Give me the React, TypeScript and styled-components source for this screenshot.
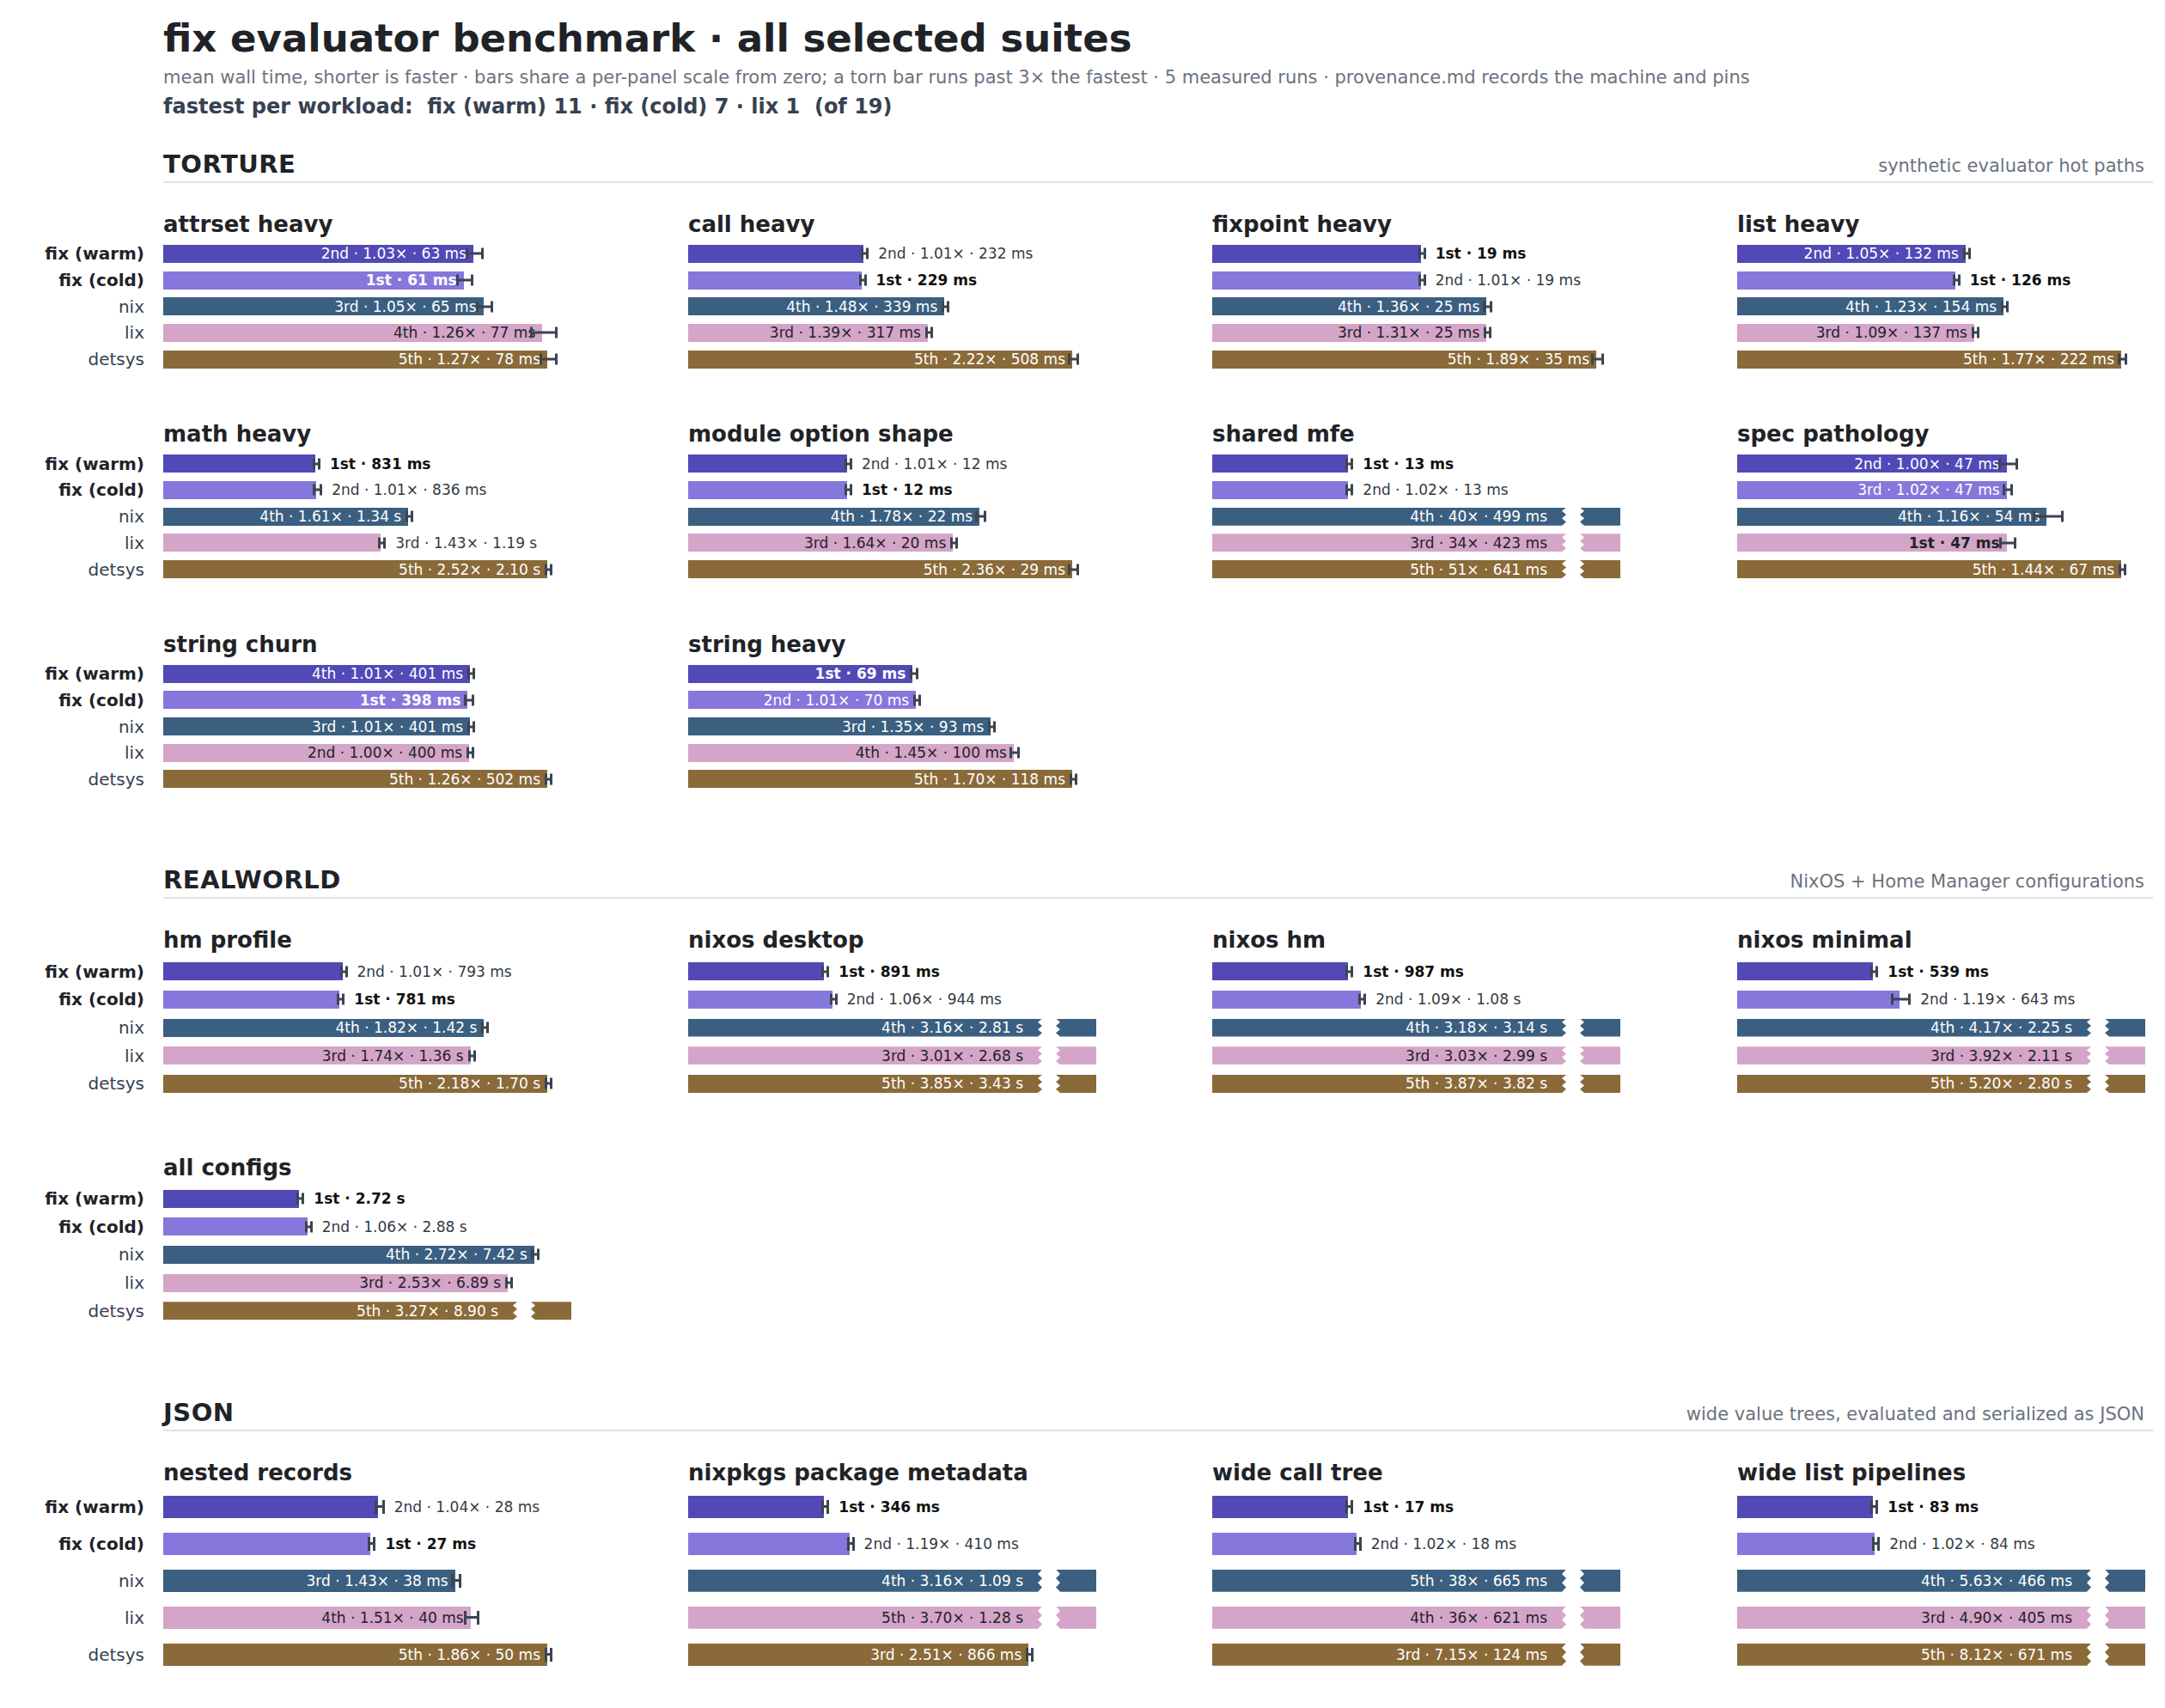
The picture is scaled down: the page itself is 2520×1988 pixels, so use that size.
import React from "react";
import styled, { createGlobalStyle } from "styled-components";

const Global = createGlobalStyle`
  html, body { margin: 0; padding: 0; background: #fff; }
  body { font-family: "DejaVu Sans", "Liberation Sans", sans-serif; color: #1f2328; }
`;

type Row = { t: string; v: number; e: number };
type Panel = { name: string; rows: Row[] };
type Section = { name: string; caption: string; rowH: number; barH: number; titleGap: number; panelGap: number; panels: Panel[] };

const r = (t: string, v: number, e: number): Row => ({ t, v, e });

const COLORS = ["#5249b7", "#8677dc", "#3b5f80", "#d4a5c8", "#8a6a39"];
const LABELS = ["fix (warm)", "fix (cold)", "nix", "lix", "detsys"];
const MAXW = 447;
const TORNW = 475;

const sections: Section[] = [
  {
    name: "TORTURE", caption: "synthetic evaluator hot paths", rowH: 30.7, barH: 21, titleGap: 4, panelGap: 57,
    panels: [
      { name: "attrset heavy", rows: [r("2nd · 1.03× · 63 ms", 63, 1.5), r("1st · 61 ms", 61, 1.5), r("3rd · 1.05× · 65 ms", 65, 1.5), r("4th · 1.26× · 77 ms", 77, 2.5), r("5th · 1.27× · 78 ms", 78, 1.5)] },
      { name: "call heavy", rows: [r("2nd · 1.01× · 232 ms", 232, 1), r("1st · 229 ms", 229, 1), r("4th · 1.48× · 339 ms", 339, 3), r("3rd · 1.39× · 317 ms", 317, 2), r("5th · 2.22× · 508 ms", 508, 6)] },
      { name: "fixpoint heavy", rows: [r("1st · 19 ms", 19, 0.2), r("2nd · 1.01× · 19 ms", 19, 0.2), r("4th · 1.36× · 25 ms", 25, 0.3), r("3rd · 1.31× · 25 ms", 25, 0.1), r("5th · 1.89× · 35 ms", 35, 0.5)] },
      { name: "list heavy", rows: [r("2nd · 1.05× · 132 ms", 132, 1.5), r("1st · 126 ms", 126, 1), r("4th · 1.23× · 154 ms", 154, 1), r("3rd · 1.09× · 137 ms", 137, 0.5), r("5th · 1.77× · 222 ms", 222, 2)] },
      { name: "math heavy", rows: [r("1st · 831 ms", 831, 10), r("2nd · 1.01× · 836 ms", 836, 20), r("4th · 1.61× · 1.34 s", 1340, 15), r("3rd · 1.43× · 1.19 s", 1190, 5), r("5th · 2.52× · 2.10 s", 2100, 15)] },
      { name: "module option shape", rows: [r("2nd · 1.01× · 12 ms", 12, 0.15), r("1st · 12 ms", 12, 0.1), r("4th · 1.78× · 22 ms", 22, 0.3), r("3rd · 1.64× · 20 ms", 20, 0.2), r("5th · 2.36× · 29 ms", 29, 0.3)] },
      { name: "shared mfe", rows: [r("1st · 13 ms", 13, 0.1), r("2nd · 1.02× · 13 ms", 13, 0.1), r("4th · 40× · 499 ms", 499, 1), r("3rd · 34× · 423 ms", 423, 1), r("5th · 51× · 641 ms", 641, 1)] },
      { name: "spec pathology", rows: [r("2nd · 1.00× · 47 ms", 47, 1.5), r("3rd · 1.02× · 47 ms", 47, 0.7), r("4th · 1.16× · 54 ms", 54, 2.5), r("1st · 47 ms", 47, 1.3), r("5th · 1.44× · 67 ms", 67, 0.3)] },
      { name: "string churn", rows: [r("4th · 1.01× · 401 ms", 401, 3), r("1st · 398 ms", 398, 5), r("3rd · 1.01× · 401 ms", 401, 3), r("2nd · 1.00× · 400 ms", 400, 2), r("5th · 1.26× · 502 ms", 502, 2)] },
      { name: "string heavy", rows: [r("1st · 69 ms", 69, 1), r("2nd · 1.01× · 70 ms", 70, 0.7), r("3rd · 1.35× · 93 ms", 93, 0.3), r("4th · 1.45× · 100 ms", 100, 1.2), r("5th · 1.70× · 118 ms", 118, 0.3)] },
    ],
  },
  {
    name: "REALWORLD", caption: "NixOS + Home Manager configurations", rowH: 32.7, barH: 21, titleGap: 5, panelGap: 66,
    panels: [
      { name: "hm profile", rows: [r("2nd · 1.01× · 793 ms", 793, 10), r("1st · 781 ms", 781, 8), r("4th · 1.82× · 1.42 s", 1420, 7), r("3rd · 1.74× · 1.36 s", 1360, 8), r("5th · 2.18× · 1.70 s", 1700, 3)] },
      { name: "nixos desktop", rows: [r("1st · 891 ms", 891, 5), r("2nd · 1.06× · 944 ms", 944, 15), r("4th · 3.16× · 2.81 s", 2810, 1), r("3rd · 3.01× · 2.68 s", 2680, 1), r("5th · 3.85× · 3.43 s", 3430, 1)] },
      { name: "nixos hm", rows: [r("1st · 987 ms", 987, 10), r("2nd · 1.09× · 1.08 s", 1080, 5), r("4th · 3.18× · 3.14 s", 3140, 1), r("3rd · 3.03× · 2.99 s", 2990, 1), r("5th · 3.87× · 3.82 s", 3820, 1)] },
      { name: "nixos minimal", rows: [r("1st · 539 ms", 539, 5), r("2nd · 1.19× · 643 ms", 643, 35), r("4th · 4.17× · 2.25 s", 2250, 1), r("3rd · 3.92× · 2.11 s", 2110, 1), r("5th · 5.20× · 2.80 s", 2800, 1)] },
      { name: "all configs", rows: [r("1st · 2.72 s", 2720, 10), r("2nd · 1.06× · 2.88 s", 2880, 40), r("4th · 2.72× · 7.42 s", 7420, 60), r("3rd · 2.53× · 6.89 s", 6890, 20), r("5th · 3.27× · 8.90 s", 8900, 1)] },
    ],
  },
  {
    name: "JSON", caption: "wide value trees, evaluated and serialized as JSON", rowH: 43, barH: 26, titleGap: 3, panelGap: 60,
    panels: [
      { name: "nested records", rows: [r("2nd · 1.04× · 28 ms", 28, 0.5), r("1st · 27 ms", 27, 0.3), r("3rd · 1.43× · 38 ms", 38, 0.5), r("4th · 1.51× · 40 ms", 40, 0.8), r("5th · 1.86× · 50 ms", 50, 0.3)] },
      { name: "nixpkgs package metadata", rows: [r("1st · 346 ms", 346, 1), r("2nd · 1.19× · 410 ms", 410, 2), r("4th · 3.16× · 1.09 s", 1090, 1), r("5th · 3.70× · 1.28 s", 1280, 1), r("3rd · 2.51× · 866 ms", 866, 5)] },
      { name: "wide call tree", rows: [r("1st · 17 ms", 17, 0.1), r("2nd · 1.02× · 18 ms", 18, 0.1), r("5th · 38× · 665 ms", 665, 1), r("4th · 36× · 621 ms", 621, 1), r("3rd · 7.15× · 124 ms", 124, 1)] },
      { name: "wide list pipelines", rows: [r("1st · 83 ms", 83, 0.3), r("2nd · 1.02× · 84 ms", 84, 0.3), r("4th · 5.63× · 466 ms", 466, 1), r("3rd · 4.90× · 405 ms", 405, 1), r("5th · 8.12× · 671 ms", 671, 1)] },
    ],
  },
];

const Page = styled.div`
  padding: 18px 14px 60px 0;
  width: 2506px;
`;
const Head = styled.div`
  padding-left: 190px;
`;
const Title = styled.h1`
  margin: 0; font-size: 45px; line-height: 54px; font-weight: 700; color: #1f2328;
`;
const Sub = styled.div`
  margin-top: 3px; font-size: 21px; line-height: 30px; color: #6b7280;
`;
const Fastest = styled.div`
  margin-top: 4px; font-size: 24px; line-height: 30px; font-weight: 700; color: #374151; white-space: pre;
`;
const SectionWrap = styled.section<{ $top: number }>`
  margin-top: ${p => p.$top}px;
`;
const SectionHead = styled.div`
  margin-left: 190px;
  display: flex; justify-content: space-between; align-items: flex-end;
  padding: 0 10px 4px 0;
  border-bottom: 2px solid #dde1e6;
`;
const SectionName = styled.div`
  font-size: 29px; line-height: 32px; font-weight: 700; color: #1f2328; letter-spacing: 0.5px;
`;
const SectionCaption = styled.div`
  font-size: 21px; line-height: 28px; color: #6b7280;
`;
const PanelRows = styled.div<{ $gap: number }>`
  margin-top: 33px;
  display: flex; flex-direction: column; gap: ${p => p.$gap}px;
`;
const PanelLine = styled.div`
  display: grid; grid-template-columns: 190px 611px 610px 611px 484px;
`;
const LabelCol = styled.div<{ $pad: number }>`
  padding-top: ${p => p.$pad}px; padding-right: 22px;
  display: flex; flex-direction: column; align-items: flex-end;
`;
const RowLabel = styled.div<{ $h: number; $bold: boolean }>`
  height: ${p => p.$h}px; display: flex; align-items: center;
  font-size: 20px; font-weight: ${p => (p.$bold ? 700 : 400)};
  color: ${p => (p.$bold ? "#1f2328" : "#374151")};
`;
const PanelBox = styled.div``;
const PanelTitle = styled.div<{ $gap: number }>`
  font-size: 26px; line-height: 30px; font-weight: 700; color: #1f2328; margin-bottom: ${p => p.$gap}px;
`;
const Track = styled.div<{ $h: number }>`
  position: relative; height: ${p => p.$h}px; display: flex; align-items: center;
`;
const Bar = styled.div<{ $c: string; $h: number; $pad: number }>`
  height: ${p => p.$h}px; background: ${p => p.$c}; flex: none;
  display: flex; align-items: center; justify-content: flex-end;
  padding-right: ${p => p.$pad}px; box-sizing: border-box; overflow: visible;
`;
const TornLeft = styled(Bar)`
  clip-path: polygon(0 0, 100% 0, calc(100% - 5px) 20%, 100% 40%, calc(100% - 5px) 60%, 100% 80%, calc(100% - 5px) 100%, 0 100%);
`;
const TornRight = styled.div<{ $c: string; $h: number }>`
  height: ${p => p.$h}px; width: 47px; margin-left: 16px; background: ${p => p.$c}; flex: none;
  clip-path: polygon(5px 0, 100% 0, 100% 100%, 5px 100%, 0 80%, 5px 60%, 0 40%, 5px 20%, 0 0);
`;
const BarText = styled.span<{ $dark: boolean; $bold: boolean }>`
  font-size: 17px; white-space: nowrap;
  color: ${p => (p.$dark ? "#1f2328" : "#ffffff")};
  font-weight: ${p => (p.$bold ? 700 : 400)};
`;
const OutText = styled.span<{ $bold: boolean }>`
  font-size: 17px; white-space: nowrap; color: ${p => (p.$bold ? "#111" : "#333a44")};
  font-weight: ${p => (p.$bold ? 700 : 400)};
`;
const Whisker = styled.div<{ $h: number }>`
  position: absolute; top: 50%; height: ${p => p.$h}px; transform: translateY(-50%);
  border-left: 3px solid #3c4450; border-right: 3px solid #3c4450; box-sizing: border-box;
  &::after { content: ""; position: absolute; left: 0; right: 0; top: 50%; height: 3px; margin-top: -1.5px; background: #3c4450; }
`;

function PanelView({ p, s }: { p: Panel; s: Section }) {
  const fastest = Math.min(...p.rows.map(x => x.v));
  const max = Math.max(...p.rows.map(x => x.v));
  const torn = max > 3 * fastest;
  const scale = torn ? TORNW / (3 * fastest) : MAXW / max;
  return (
    <PanelBox>
      <PanelTitle $gap={s.titleGap}>{p.name}</PanelTitle>
      {p.rows.map((row, i) => {
        const bold = row.t.startsWith("1st");
        const dark = i === 3;
        const c = COLORS[i];
        if (torn && row.v > 3 * fastest) {
          return (
            <Track key={i} $h={s.rowH}>
              <TornLeft $c={c} $h={s.barH} $pad={22} style={{ width: 412 }}>
                <BarText $dark={dark} $bold={bold}>{row.t}</BarText>
              </TornLeft>
              <TornRight $c={c} $h={s.barH} />
            </Track>
          );
        }
        const w = row.v * scale;
        const ew = Math.max(row.e * scale, 3);
        const inside = w > 259;
        return (
          <Track key={i} $h={s.rowH}>
            <Bar $c={c} $h={s.barH} $pad={8} style={{ width: w }}>
              {inside && <BarText $dark={dark} $bold={bold}>{row.t}</BarText>}
            </Bar>
            <Whisker $h={Math.round(s.barH * 0.6)} style={{ left: w - ew, width: ew * 2 + 3 }} />
            {!inside && <OutText $bold={bold} style={{ marginLeft: ew + 14 }}>{row.t}</OutText>}
          </Track>
        );
      })}
    </PanelBox>
  );
}

export default function App() {
  return (
    <Page>
      <Global />
      <Head>
        <Title>fix evaluator benchmark · all selected suites</Title>
        <Sub>mean wall time, shorter is faster · bars share a per-panel scale from zero; a torn bar runs past 3× the fastest · 5 measured runs · provenance.md records the machine and pins</Sub>
        <Fastest>{"fastest per workload:  fix (warm) 11 · fix (cold) 7 · lix 1  (of 19)"}</Fastest>
      </Head>
      {sections.map((s, si) => {
        const lines: Panel[][] = [];
        for (let i = 0; i < s.panels.length; i += 4) lines.push(s.panels.slice(i, i + 4));
        return (
          <SectionWrap key={s.name} $top={si === 0 ? 36 : 86}>
            <SectionHead>
              <SectionName>{s.name}</SectionName>
              <SectionCaption>{s.caption}</SectionCaption>
            </SectionHead>
            <PanelRows $gap={s.panelGap}>
              {lines.map((line, li) => (
                <PanelLine key={li}>
                  <LabelCol $pad={30 + s.titleGap}>
                    {LABELS.map((l, i) => (
                      <RowLabel key={l} $h={s.rowH} $bold={i < 2}>{l}</RowLabel>
                    ))}
                  </LabelCol>
                  {line.map(p => <PanelView key={p.name} p={p} s={s} />)}
                </PanelLine>
              ))}
            </PanelRows>
          </SectionWrap>
        );
      })}
    </Page>
  );
}
